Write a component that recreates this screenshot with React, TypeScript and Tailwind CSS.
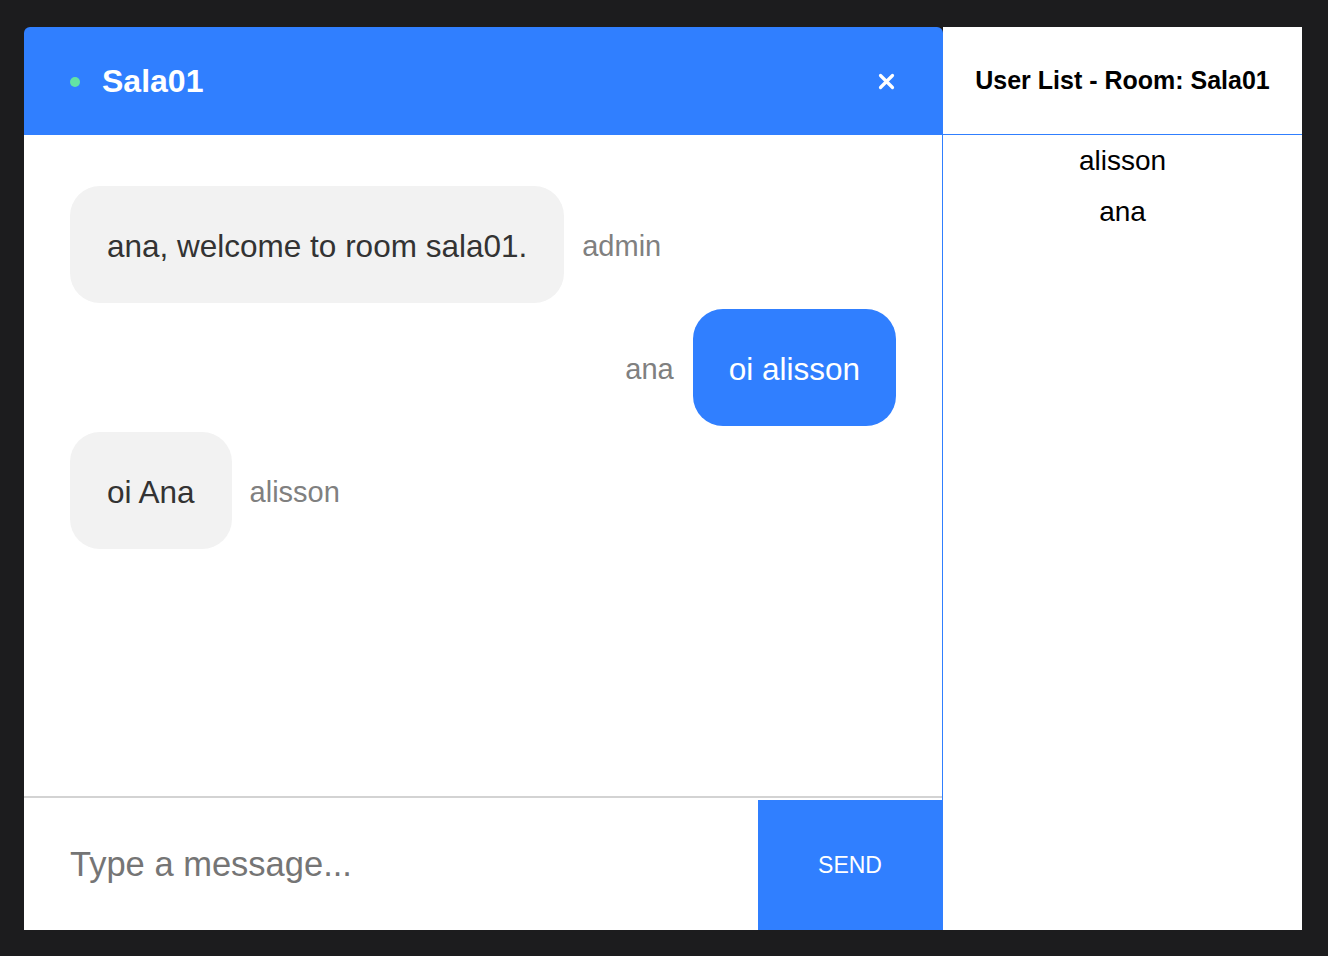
import React from 'react';

interface Message {
  id: number;
  user: string;
  text: string;
  own: boolean;
}

const messages: Message[] = [
  { id: 1, user: 'admin', text: 'ana, welcome to room sala01.', own: false },
  { id: 2, user: 'ana', text: 'oi alisson', own: true },
  { id: 3, user: 'alisson', text: 'oi Ana', own: false },
];

const users = ['alisson', 'ana'];

const MessageRow = ({ message }: { message: Message }) => {
  if (message.own) {
    return (
      <div className="flex items-center justify-end">
        <span className="mr-[19px] pt-[4px] text-[29px] text-[#808080]">{message.user}</span>
        <div className="h-[117px] flex items-center pt-[4px] px-[36px] rounded-[30px] bg-[#307fff] text-white text-[31.5px]">
          {message.text}
        </div>
      </div>
    );
  }
  return (
    <div className="flex items-center">
      <div className="h-[117px] flex items-center pt-[4px] px-[37px] rounded-[30px] bg-[#f2f2f2] text-[#333333] text-[31.5px]">
        {message.text}
      </div>
      <span className="ml-[18px] pt-[4px] text-[29px] text-[#808080]">{message.user}</span>
    </div>
  );
};

export default function App() {
  return (
    <div className="min-h-screen bg-[#1c1c1e] pt-[27px] pl-[24px] font-['Liberation_Sans',Arial,sans-serif]">
      <div className="flex h-[903px]">
        {/* Chat window */}
        <div className="w-[919px] flex flex-col">
          <div className="h-[108px] shrink-0 flex items-center pl-[46px] pr-[48px] bg-[#307fff] rounded-t-[6px]">
            <span className="w-[10px] h-[10px] mt-[2px] rounded-full bg-[#62e3a4]" />
            <h2 className="ml-[22px] text-[32px] font-bold text-white">Sala01</h2>
            <button className="ml-auto text-white">
              <svg width="17" height="17" viewBox="0 0 17 17" fill="none" stroke="currentColor" strokeWidth="3.2" strokeLinecap="round">
                <path d="M2.5 2.5 L14.5 14.5 M14.5 2.5 L2.5 14.5" />
              </svg>
            </button>
          </div>

          <div className="flex-1 flex flex-col bg-white border-r border-[#307fff]">
            <div className="flex-1 flex flex-col gap-[6px] px-[46px] pt-[51px]">
              {messages.map(m => (
                <MessageRow key={m.id} message={m} />
              ))}
            </div>
            <div className="h-[134px] shrink-0 flex pt-[2px] border-t-2 border-[#d3d3d3]">
              <input
                className="flex-1 pl-[46px] bg-transparent outline-none text-[34.5px] text-[#333333] placeholder:text-[#757575]"
                placeholder="Type a message..."
              />
              <button className="w-[184px] bg-[#307fff] text-white text-[23px]">SEND</button>
            </div>
          </div>
        </div>

        {/* User list */}
        <div className="w-[359px] flex flex-col bg-white">
          <div className="h-[108px] shrink-0 flex items-center justify-center border-b border-[#307fff]">
            <h3 className="text-[25px] font-bold text-black">User List - Room: Sala01</h3>
          </div>
          <ul className="flex flex-col items-center">
            {users.map(u => (
              <li key={u} className="leading-[51px] text-[28px] text-black">{u}</li>
            ))}
          </ul>
        </div>
      </div>
    </div>
  );
}
